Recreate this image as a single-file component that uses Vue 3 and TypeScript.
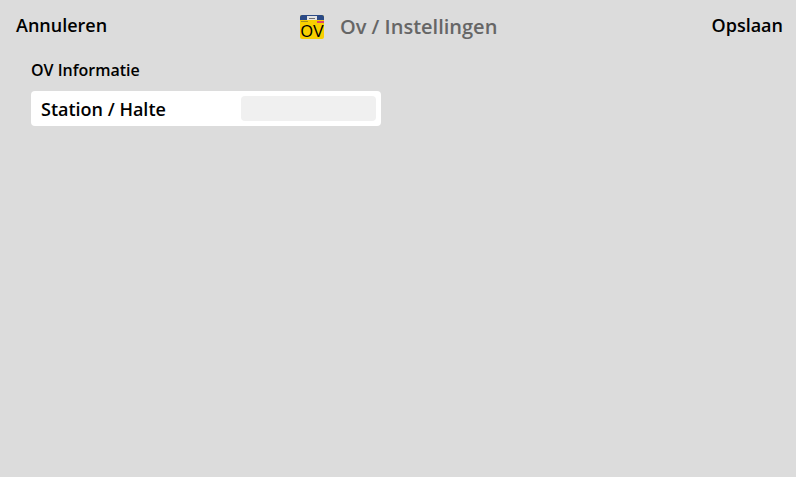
<script setup lang="ts">
const sectionTitle = 'OV Informatie'
const fieldLabel = 'Station / Halte'
</script>

<template>
  <div class="page">
    <header class="topbar">
      <span class="action">Annuleren</span>
      <div class="title">
        <svg class="app-icon" width="24" height="24" viewBox="0 0 24 24">
          <rect x="0" y="0" width="24" height="24" rx="2" fill="#f8cf00" />
          <path d="M0 2a2 2 0 0 1 2-2h20a2 2 0 0 1 2 2v3H0z" fill="#2b4a86" />
          <rect x="7" y="1" width="10" height="4" fill="#e4e4e4" />
          <rect x="9" y="3" width="6" height="1" fill="#6f6f6f" />
          <rect x="1" y="6" width="7" height="1" fill="#a58f20" />
          <rect x="17" y="6" width="7" height="2" fill="#d8456a" />
          <text x="12" y="22" text-anchor="middle" class="icon-text">OV</text>
        </svg>
        <span class="title-text">Ov / Instellingen</span>
      </div>
      <span class="action">Opslaan</span>
    </header>

    <section class="section">
      <h2 class="section-title">{{ sectionTitle }}</h2>
      <div class="row">
        <span class="row-label">{{ fieldLabel }}</span>
        <div class="row-input"></div>
      </div>
    </section>
  </div>
</template>

<style scoped>
.page {
  width: 796px;
  height: 477px;
  background: #dcdcdc;
  font-family: "Open Sans", sans-serif;
  color: #000;
  overflow: hidden;
}
.topbar {
  position: relative;
  display: flex;
  align-items: center;
  justify-content: space-between;
  height: 50px;
  padding: 0 13px 0 16px;
}
.action {
  font-size: 18px;
  font-weight: 600;
}
.title {
  position: absolute;
  left: 300px;
  top: 14px;
  display: flex;
  align-items: center;
  gap: 16px;
}
.app-icon {
  display: block;
}
.icon-text {
  font-family: "Liberation Sans", sans-serif;
  font-size: 16px;
  fill: #000;
}
.title-text {
  font-size: 20px;
  font-weight: 600;
  line-height: 26px;
  color: #666;
}
.section {
  padding: 9px 15px 0 31px;
}
.section-title {
  margin: 0 0 10px;
  font-size: 16px;
  font-weight: 600;
  line-height: 22px;
}
.row {
  display: flex;
  align-items: center;
  justify-content: space-between;
  width: 350px;
  height: 35px;
  box-sizing: border-box;
  padding: 0 5px 0 10px;
  background: #fff;
  border-radius: 4px;
}
.row-label {
  font-size: 18px;
  font-weight: 600;
}
.row-input {
  width: 135px;
  height: 25px;
  background: #f0f0f0;
  border-radius: 4px;
}
</style>

<style>
html, body {
  margin: 0;
  background: #dcdcdc;
}
</style>
